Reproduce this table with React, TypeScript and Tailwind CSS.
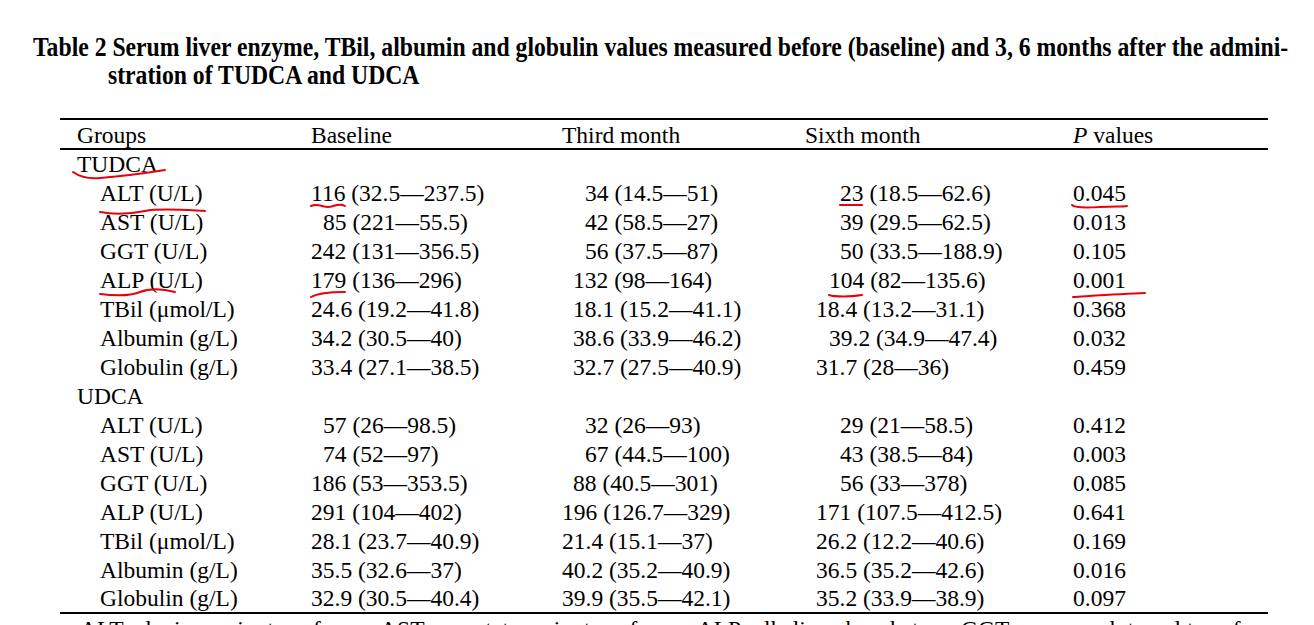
import React from 'react';

type Cell = [string, string];

interface Row {
  label: string;
  group?: boolean;
  b?: Cell;
  t?: Cell;
  s?: Cell;
  p?: string;
}

const rows: Row[] = [
  { label: 'TUDCA', group: true },
  { label: 'ALT (U/L)', b: ['116 (32.5—237.5)', ''], t: ['34 (14.5—51)', 'pl-[23px]'], s: ['23 (18.5—62.6)', 'pl-[35px]'], p: '0.045' },
  { label: 'AST (U/L)', b: ['85 (221—55.5)', 'pl-[12px]'], t: ['42 (58.5—27)', 'pl-[23px]'], s: ['39 (29.5—62.5)', 'pl-[35px]'], p: '0.013' },
  { label: 'GGT (U/L)', b: ['242 (131—356.5)', ''], t: ['56 (37.5—87)', 'pl-[23px]'], s: ['50 (33.5—188.9)', 'pl-[35px]'], p: '0.105' },
  { label: 'ALP (U/L)', b: ['179 (136—296)', ''], t: ['132 (98—164)', 'pl-[11px]'], s: ['104 (82—135.6)', 'pl-[24px]'], p: '0.001' },
  { label: 'TBil (μmol/L)', b: ['24.6 (19.2—41.8)', ''], t: ['18.1 (15.2—41.1)', 'pl-[11px]'], s: ['18.4 (13.2—31.1)', 'pl-[11px]'], p: '0.368' },
  { label: 'Albumin (g/L)', b: ['34.2 (30.5—40)', ''], t: ['38.6 (33.9—46.2)', 'pl-[11px]'], s: ['39.2 (34.9—47.4)', 'pl-[24px]'], p: '0.032' },
  { label: 'Globulin (g/L)', b: ['33.4 (27.1—38.5)', ''], t: ['32.7 (27.5—40.9)', 'pl-[11px]'], s: ['31.7 (28—36)', 'pl-[11px]'], p: '0.459' },
  { label: 'UDCA', group: true },
  { label: 'ALT (U/L)', b: ['57 (26—98.5)', 'pl-[12px]'], t: ['32 (26—93)', 'pl-[23px]'], s: ['29 (21—58.5)', 'pl-[35px]'], p: '0.412' },
  { label: 'AST (U/L)', b: ['74 (52—97)', 'pl-[12px]'], t: ['67 (44.5—100)', 'pl-[23px]'], s: ['43 (38.5—84)', 'pl-[35px]'], p: '0.003' },
  { label: 'GGT (U/L)', b: ['186 (53—353.5)', ''], t: ['88 (40.5—301)', 'pl-[11px]'], s: ['56 (33—378)', 'pl-[35px]'], p: '0.085' },
  { label: 'ALP (U/L)', b: ['291 (104—402)', ''], t: ['196 (126.7—329)', ''], s: ['171 (107.5—412.5)', 'pl-[11px]'], p: '0.641' },
  { label: 'TBil (μmol/L)', b: ['28.1 (23.7—40.9)', ''], t: ['21.4 (15.1—37)', ''], s: ['26.2 (12.2—40.6)', 'pl-[11px]'], p: '0.169' },
  { label: 'Albumin (g/L)', b: ['35.5 (32.6—37)', ''], t: ['40.2 (35.2—40.9)', ''], s: ['36.5 (35.2—42.6)', 'pl-[11px]'], p: '0.016' },
  { label: 'Globulin (g/L)', b: ['32.9 (30.5—40.4)', ''], t: ['39.9 (35.5—42.1)', ''], s: ['35.2 (33.9—38.9)', 'pl-[11px]'], p: '0.097' },
];

const grid = 'grid grid-cols-[251px_251px_243px_268px_195px] items-center';

// hand drawn red marks over the scanned table
const Marks = () => (
  <svg className="absolute inset-0 pointer-events-none" width="1314" height="625" viewBox="0 0 1314 625" fill="none" stroke="#e8000b" strokeWidth="2" strokeLinecap="round">
    <path d="M73 172 C80 177 88 179 100 178 S140 174 165 170" />
    <path d="M100 212 C115 215 130 214 145 211 S185 210 205 211" />
    <path d="M311 206 C318 203 322 207 328 207 S338 202 345 206" />
    <path d="M840 205 L862 205" />
    <path d="M1072 205 C1075 208 1085 208 1100 207 S1122 207 1127 206" />
    <path d="M100 294 C115 296 130 296 140 292 S160 288 175 292" />
    <path d="M311 297 C318 293 330 292 345 292" />
    <path d="M829 295 C835 297 850 297 862 295" />
    <path d="M1073 297 C1090 296 1120 294 1145 293" />
  </svg>
);

export default function App() {
  return (
    <div className="relative w-[1314px] h-[625px] overflow-hidden bg-white text-black font-['Liberation_Serif','Times_New_Roman',serif]">
      {/* Caption */}
      <div className="pt-[34px] h-[90px]">
        <div className="ml-[108px] -indent-[75px] text-[23.7px] leading-[25px] font-bold whitespace-nowrap scale-y-[1.12] origin-top">
          Table 2 Serum liver enzyme, TBil, albumin and globulin values measured before (baseline) and 3, 6 months after the admini-
          <br />
          stration of TUDCA and UDCA
        </div>
      </div>

      {/* Table */}
      <div className="mt-[28px] ml-[60px] w-[1208px] text-[23.5px] leading-none">
        <div className="h-[2px] bg-black" />
        <div className={`${grid} h-[28px] pt-[4px]`}>
          <div className="pl-[17px]">Groups</div>
          <div>Baseline</div>
          <div>Third month</div>
          <div>Sixth month</div>
          <div>
            <span className="italic">P</span> values
          </div>
        </div>
        <div className="h-[2px] bg-black" />
        {rows.map((r, i) => (
          <div key={i} className={`${grid} ${i === rows.length - 1 ? 'h-[27px]' : 'h-[29px]'} whitespace-nowrap`}>
            <div className={r.group ? 'pl-[17px]' : 'pl-[40px]'}>{r.label}</div>
            <div className={r.b?.[1]}>{r.b?.[0]}</div>
            <div className={r.t?.[1]}>{r.t?.[0]}</div>
            <div className={r.s?.[1]}>{r.s?.[0]}</div>
            <div>{r.p}</div>
          </div>
        ))}
        <div className="h-[2px] bg-black" />
        <div className="pl-[20px] pt-[4px] whitespace-nowrap">
          ALT: alanine aminotransferase; AST: aspartate aminotransferase; ALP: alkaline phosphatase; GGT: gamma-glutamyl transferase
        </div>
      </div>

      <Marks />
    </div>
  );
}
